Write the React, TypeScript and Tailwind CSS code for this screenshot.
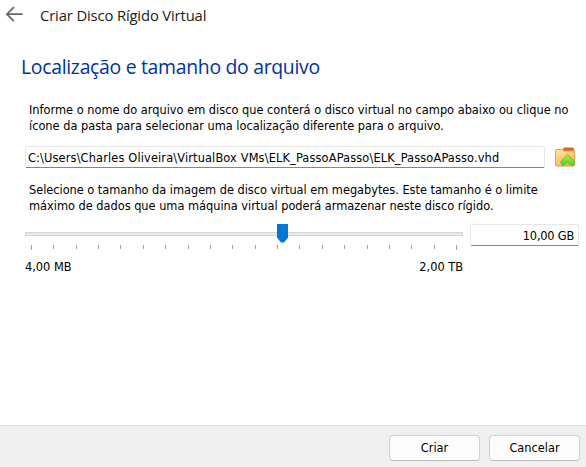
const ticks = Array.from({ length: 20 }, (_, i) => Math.round(31 - 25 + i * 22.37));

function BackArrow() {
  return (
    <svg width="18" height="18" viewBox="0 0 18 18" fill="none" stroke="#666" strokeWidth="1.7">
      <path d="M8.9 2.2 1.9 9.2l7 7M2.1 9.2H17.6" />
    </svg>
  );
}

function FolderIcon() {
  return (
    <svg width="22" height="20" viewBox="0 0 22 20">
      <defs>
        <linearGradient id="folder" x1="0" y1="0" x2="0.5" y2="1">
          <stop offset="0" stopColor="#ffe9a0" />
          <stop offset="1" stopColor="#fbb850" />
        </linearGradient>
        <linearGradient id="arrow" x1="0" y1="0" x2="0" y2="1">
          <stop offset="0" stopColor="#a8ee48" />
          <stop offset="1" stopColor="#55d028" />
        </linearGradient>
      </defs>
      <path d="M7.5 5 8.4 1.2Q8.6.4 9.4.4H17.6q.9 0 1.1.9l.6 2.2V6H7.5z" fill="#e2602a" />
      <path d="M.6 3.5q0-1 1-1h5.6l1.6 1.4H18.6q1 0 1 1V18q0 1-1 1H1.6q-1 0-1-1z" fill="url(#folder)" stroke="#eb9a48" strokeWidth="1" />
      <path d="M12.7 7.8 20 14.9 17.6 18.8 12.7 15.6 7.8 18.8 5.4 14.9z" fill="url(#arrow)" stroke="#58b52c" strokeWidth=".8" strokeLinejoin="round" />
    </svg>
  );
}

function Slider() {
  return (
    <div className="relative h-[26px] w-[438px]">
      <div className="absolute top-[8px] h-[4px] w-full border border-[#d3d6d5] bg-[#e7eaea]" />
      {ticks.map((x, i) => (
        <div
          key={x}
          className={`absolute top-[21px] w-px bg-[#a5a195] ${i === 0 || i === 19 ? 'h-[5px]' : 'h-[4px]'}`}
          style={{ left: x }}
        />
      ))}
      <svg className="absolute top-0 left-[252px]" width="11" height="19" viewBox="0 0 11 19">
        <path d="M0 0h11v13.5L7 18.5H4L0 13.5z" fill="#0078d7" />
      </svg>
    </div>
  );
}

export default function App() {
  return (
    <div className="flex h-[467px] w-[586px] flex-col overflow-hidden whitespace-nowrap bg-white font-['DejaVu_Sans_Condensed',sans-serif] text-[12.65px] leading-4 text-black">
      <header className="flex h-8 items-start pt-[5px] pl-[5px] font-['Open_Sans',sans-serif] text-[14.8px] leading-5 tracking-[-0.14px] text-[#1b1b1b]">
        <BackArrow />
        <span className="ml-[17px]">Criar Disco Rígido Virtual</span>
      </header>
      <main className="flex flex-1 flex-col pl-[25px]">
        <h1 className="-ml-1 mt-[21px] h-7 font-['Open_Sans',sans-serif] text-[19.4px] leading-7 tracking-[-0.3px] text-[#003399]">
          Localização e tamanho do arquivo
        </h1>
        <p className="mt-[21px] pl-1">
          Informe o nome do arquivo em disco que conterá o disco virtual no campo abaixo ou clique no
          <br />
          ícone da pasta para selecionar uma localização diferente para o arquivo.
        </p>
        <div className="mt-3 flex h-[22px] items-center">
          <div className="flex h-[22px] w-[520px] items-center rounded-[2px] border border-[#e8e8e8] border-b-[#868686] pt-[2px] pl-[2px] tracking-[0.148px]">
            C:\Users\Charles Oliveira\VirtualBox VMs\ELK_PassoAPasso\ELK_PassoAPasso.vhd
          </div>
          <span className="ml-[10px]">
            <FolderIcon />
          </span>
        </div>
        <p className="mt-[14px] pl-1">
          <span className="tracking-[-0.025px]">
            Selecione o tamanho da imagem de disco virtual em megabytes. Este tamanho é o limite
          </span>
          <br />
          <span className="tracking-[-0.01px]">
            máximo de dados que uma máquina virtual poderá armazenar neste disco rígido.
          </span>
        </p>
        <div className="mt-[10px] flex">
          <div>
            <Slider />
            <div className="mt-[9px] flex w-[438px] justify-between">
              <span>4,00 MB</span>
              <span>2,00 TB</span>
            </div>
          </div>
          <div className="ml-[7px] flex h-[22px] w-[109px] items-center justify-end rounded-[2px] border border-[#e8e8e8] border-b-[#868686] pt-[2px] pr-[4px] tracking-[-0.2px]">
            10,00 GB
          </div>
        </div>
      </main>
      <footer className="flex h-[42px] gap-[9px] border-t border-[#dfdfdf] bg-[#f0f0f0] pt-[9px] pl-[389px]">
        <button className="h-[26px] w-[91px] rounded-[4px] border border-[#d0d0d0] border-b-[#bcbcbc] bg-[#fdfdfd]">Criar</button>
        <button className="h-[26px] w-[91px] rounded-[4px] border border-[#d0d0d0] border-b-[#bcbcbc] bg-[#fdfdfd]">Cancelar</button>
      </footer>
    </div>
  );
}
